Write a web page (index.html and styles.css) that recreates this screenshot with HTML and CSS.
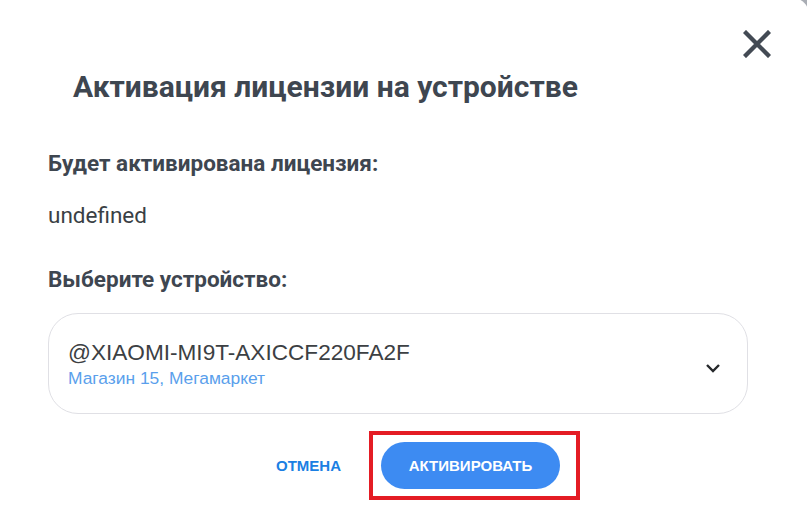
FILE: index.html
```html
<!DOCTYPE html>
<html lang="ru">
<head>
<meta charset="utf-8">
<link rel="stylesheet" href="styles.css">
</head>
<body>
<div class="dialog">
  <div class="close-row">
    <button class="close" aria-label="Закрыть">
      <svg width="28" height="28" viewBox="0 0 28 28"><path d="M3 3 L25 25 M25 3 L3 25" stroke="#434a54" stroke-width="4.4" stroke-linecap="square"/></svg>
    </button>
  </div>
  <h1 class="title">Активация лицензии на устройстве</h1>
  <div class="content">
    <div class="label">Будет активирована лицензия:</div>
    <div class="value">undefined</div>
    <div class="label label-device">Выберите устройство:</div>
    <div class="select">
      <div class="select-text">
        <div class="device">@XIAOMI-MI9T-AXICCF220FA2F</div>
        <div class="store">Магазин 15, Мегамаркет</div>
      </div>
      <svg class="chevron" width="16" height="10" viewBox="0 0 16 10"><path d="M2 2 L8 8 L14 2" fill="none" stroke="#26282b" stroke-width="2.4"/></svg>
    </div>
  </div>
  <div class="actions">
    <button class="btn-cancel">ОТМЕНА</button>
    <div class="highlight">
      <button class="btn-primary">АКТИВИРОВАТЬ</button>
    </div>
  </div>
</div>
</body>
</html>
```
FILE: styles.css
```css
html, body {
  margin: 0;
  padding: 0;
  background: #a9adb4;
  overflow: hidden;
}
body {
  width: 807px;
  height: 512px;
  font-family: Roboto, "Liberation Sans", sans-serif;
}
.dialog {
  background: #ffffff;
  width: 810px;
  height: 520px;
  margin-top: -3px;
  border-top-right-radius: 20px;
  box-sizing: border-box;
  display: flex;
  flex-direction: column;
}
.close-row {
  display: flex;
  justify-content: flex-end;
  padding: 33px 39px 0 0;
  height: 28px;
}
.close {
  border: 0;
  background: none;
  padding: 0;
  width: 28px;
  height: 28px;
  cursor: pointer;
}
.title {
  margin: 11px 0 0 73px;
  font-size: 30px;
  font-weight: 700;
  color: #3e4650;
  line-height: 36px;
}
.content {
  padding: 45px 60px 0 48px;
  display: flex;
  flex-direction: column;
}
.label {
  font-size: 22.5px;
  font-weight: 700;
  color: #3e4650;
  line-height: 27px;
}
.value {
  margin-top: 25px;
  font-size: 22.5px;
  color: #3a3f45;
  line-height: 27px;
}
.label-device {
  margin-top: 37px;
}
.select {
  margin-top: 20px;
  width: 700px;
  height: 101px;
  box-sizing: border-box;
  border: 1px solid #e0e0e5;
  border-radius: 30px;
  display: flex;
  align-items: center;
  padding: 0 26px 0 19px;
}
.select-text {
  flex: 1;
}
.device {
  font-family: "Liberation Sans", Arial, sans-serif;
  font-size: 22.6px;
  color: #3c4043;
  line-height: 26px;
}
.store {
  font-family: "Liberation Sans", Arial, sans-serif;
  font-size: 17.4px;
  color: #5a9fec;
  line-height: 20px;
  margin-top: 2px;
}
.chevron {
  margin-top: 8px;
}
.actions {
  margin-top: 17px;
  display: flex;
  align-items: center;
  gap: 28px;
  padding-left: 276px;
}
.btn-cancel {
  border: 0;
  background: none;
  font-family: "Liberation Sans", Arial, sans-serif;
  font-weight: 700;
  font-size: 15px;
  color: #1b7fe3;
  padding: 0;
}
.highlight {
  border: 4px solid #e41c24;
  padding: 7px 16px 7px 8px;
}
.btn-primary {
  border: 0;
  background: #3d8bf2;
  color: #ffffff;
  font-family: "Liberation Sans", Arial, sans-serif;
  font-weight: 700;
  font-size: 15px;
  width: 179px;
  height: 47px;
  border-radius: 24px;
  display: block;
}
```
